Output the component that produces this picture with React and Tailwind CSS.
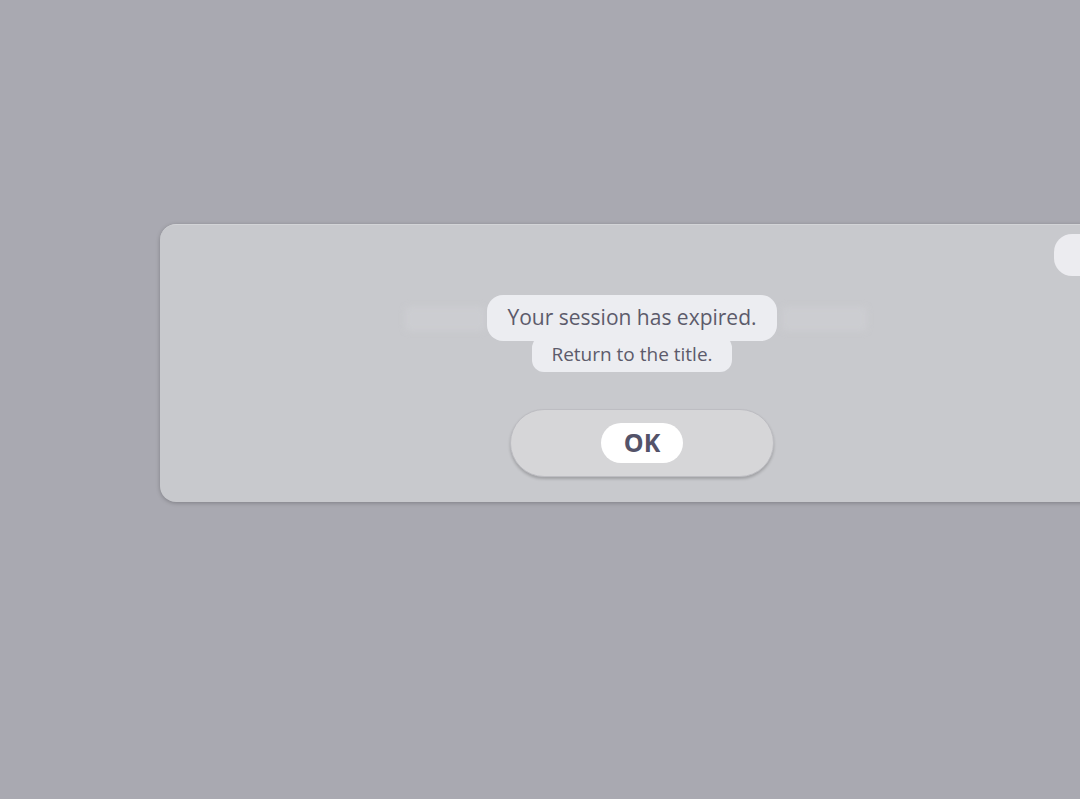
export default function App() {
  const font = { fontFamily: "'Open Sans', 'Noto Sans', 'Liberation Sans', sans-serif" };
  return (
    <div className="w-[1080px] h-[799px] overflow-hidden bg-[#a9a9b1] pt-[224px] pl-[160px]" style={font}>
      <div className="relative w-[964px] h-[278px] rounded-[16px] bg-[#c8c9cd] shadow-[0_1px_4px_rgba(0,0,0,0.25)] border-t border-[#d3d4d7] flex flex-col items-center pt-[70px]">
        <div className="absolute left-[894px] top-[9px] w-[70px] h-[42px] rounded-[18px] bg-[#ececf0]"></div>
        <div className="absolute left-[245px] top-[82px] w-[80px] h-[24px] bg-[#cccdd1] blur-[3px] rounded"></div>
        <div className="absolute left-[622px] top-[82px] w-[85px] h-[24px] bg-[#cccdd1] blur-[3px] rounded"></div>
        <div className="mr-[20px] flex flex-col items-center">
          <div className="relative z-10 flex h-[46px] items-center rounded-[16px] bg-[#ecedf1] px-[20px] text-[21px] text-[#5c5b6b]">
            Your session has expired.
          </div>
          <div className="mt-[-5px] flex h-[36px] items-center rounded-[12px] bg-[#ecedf1] px-[19px] text-[19px] text-[#5c5b6b]">
            Return to the title.
          </div>
        </div>
        <div className="mt-[37px] flex h-[68px] w-[264px] items-center justify-center rounded-full bg-[#d6d6d8] border border-[#bdbdc2] shadow-[0_2px_3px_rgba(0,0,0,0.2)]">
          <div className="flex h-[40px] w-[82px] items-center justify-center rounded-full bg-white text-[25px] font-bold text-[#545369]">
            OK
          </div>
        </div>
      </div>
    </div>
  );
}
